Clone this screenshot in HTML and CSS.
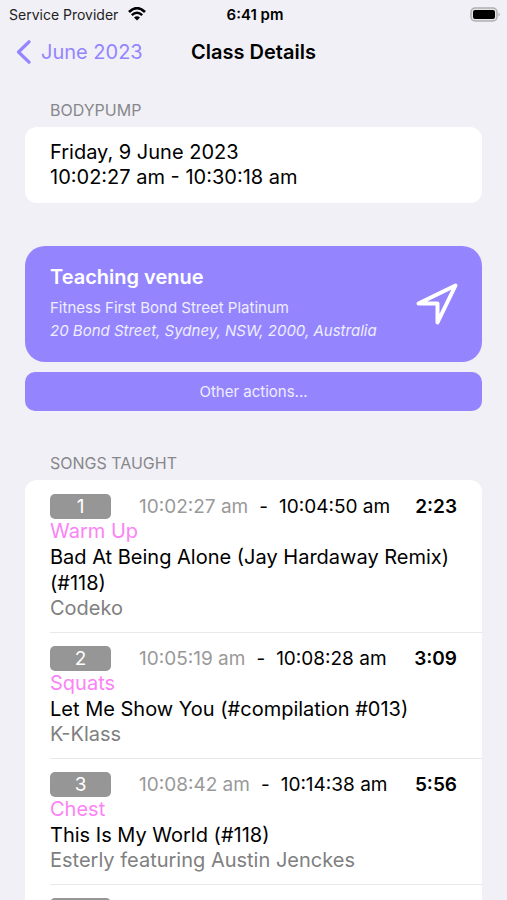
FILE: index.html
```html
<!DOCTYPE html>
<html lang="en">
<head>
<meta charset="utf-8">
<meta name="viewport" content="width=device-width, initial-scale=1">
<title>Class Details</title>
<link rel="stylesheet" href="styles.css">
</head>
<body>
<div class="status">
  <div class="carrier">
    <span>Service Provider</span>
    <svg class="wifi" viewBox="0 0 18 14" aria-hidden="true">
      <path d="M1 5Q9-2.600 17 5" fill="none" stroke="#000" stroke-width="2.700"/>
      <path d="M3.800 8.100Q9 3.300 14.200 8.100" fill="none" stroke="#000" stroke-width="2.500"/>
      <path d="M6 10.500Q9 8 12 10.500L9 13.600Z"/>
    </svg>
  </div>
  <div class="clock">6:41 pm</div>
  <div class="power">
    <svg class="battery" viewBox="0 0 31 15" aria-hidden="true">
      <rect x="1" y="1" width="26" height="13" rx="4" fill="#e4e4e6" stroke="#b0b0b2" stroke-width="1.500"/>
      <rect x="3" y="3" width="22" height="9" rx="2"/>
      <path d="M28.500 5.500Q31 7.500 28.500 9.500Z" fill="#aaa"/>
    </svg>
  </div>
</div>
<header class="nav">
  <a class="back" href="#">
    <svg class="chevron" viewBox="0 0 15 24" aria-hidden="true"><path d="M13 1.800L2.500 12L13 22.200" fill="none" stroke="currentColor" stroke-width="3.200" stroke-linecap="round" stroke-linejoin="round"/></svg>
    <span>June 2023</span>
  </a>
  <h1>Class Details</h1>
</header>
<main>
  <section>
    <h2>BODYPUMP</h2>
    <div class="card session">
      <div>Friday, 9 June 2023</div>
      <div>10:02:27 am - 10:30:18 am</div>
    </div>
  </section>
  <section class="actions">
    <button class="venue" type="button">
      <span class="venue-text">
        <span class="venue-title">Teaching venue</span>
        <span class="venue-line">Fitness First Bond Street Platinum</span>
        <span class="venue-line address">20 Bond Street, Sydney, NSW, 2000, Australia</span>
      </span>
      <svg class="locate" viewBox="0 0 42 42" aria-hidden="true"><path d="M2.500 20.500L39.500 2.500L21.500 39.500V20.500Z" fill="none" stroke="currentColor" stroke-width="4" stroke-linejoin="round"/></svg>
    </button>
    <button class="other" type="button">Other actions...</button>
  </section>
  <section>
    <h2>SONGS TAUGHT</h2>
    <ol class="card songs">
      <li>
        <div class="times"><span class="badge">1</span><span class="start">10:02:27 am</span><span class="dash">-</span><span>10:04:50 am</span><strong>2:23</strong></div>
        <div class="track">Warm Up</div>
        <div class="title">Bad At Being Alone (Jay Hardaway Remix) (#118)</div>
        <div class="artist">Codeko</div>
      </li>
      <li>
        <div class="times"><span class="badge">2</span><span class="start">10:05:19 am</span><span class="dash">-</span><span>10:08:28 am</span><strong>3:09</strong></div>
        <div class="track">Squats</div>
        <div class="title">Let Me Show You (#compilation #013)</div>
        <div class="artist">K-Klass</div>
      </li>
      <li>
        <div class="times"><span class="badge">3</span><span class="start">10:08:42 am</span><span class="dash">-</span><span>10:14:38 am</span><strong>5:56</strong></div>
        <div class="track">Chest</div>
        <div class="title">This Is My World (#118)</div>
        <div class="artist">Esterly featuring Austin Jenckes</div>
      </li>
      <li>
        <div class="times"><span class="badge"></span></div>
      </li>
    </ol>
  </section>
</main>
</body>
</html>
```

FILE: styles.css
```css
* {
  box-sizing: border-box;
}

body {
  margin: 0;
  height: 100vh;
  overflow: hidden;
  background: #f1f0f6;
  color: #000;
  font: 20px/25px Inter, "Liberation Sans", sans-serif;
}

.status {
  display: grid;
  grid-template-columns: 1fr auto 1fr;
  align-items: center;
  height: 28px;
  padding: 0 6px 0 9px;
  font-size: 14px;
}

.carrier {
  display: flex;
  align-items: center;
  gap: 10px;
  color: #222;
}

.wifi {
  width: 18px;
  height: 14px;
}

.clock {
  font-size: 15px;
  font-weight: 600;
}

.power {
  display: flex;
  justify-content: flex-end;
}

.battery {
  width: 31px;
  height: 15px;
}

.nav {
  display: grid;
  grid-template-columns: 1fr auto 1fr;
  align-items: center;
  height: 48px;
  padding: 0 16px;
}

.back {
  display: flex;
  align-items: center;
  gap: 10px;
  color: #9485ff;
  text-decoration: none;
}

.chevron {
  width: 15px;
  height: 24px;
}

h1 {
  margin: 0;
  font-size: 20px;
  font-weight: 600;
}

main {
  padding: 24px 25px 0;
}

h2 {
  margin: 0;
  padding: 0 25px 7px;
  color: #87878c;
  font-size: 16px;
  font-weight: 400;
  line-height: 20px;
}

.card {
  border-radius: 12px;
  background: #fff;
}

.session {
  padding: 13px 25px;
}

.actions {
  display: grid;
  gap: 10px;
  margin: 43px 0 42px;
}

button {
  border: 0;
  background: #9485ff;
  color: #fff;
  font: inherit;
}

.venue {
  display: flex;
  align-items: center;
  justify-content: space-between;
  padding: 19px 24px 20px 25px;
  border-radius: 20px;
  text-align: left;
}

.venue-text {
  display: grid;
}

.venue-title {
  padding-bottom: 6px;
  font-weight: 600;
}

.venue-line {
  color: #efedff;
  font-size: 15px;
  line-height: 23px;
}

.address {
  font-style: italic;
}

.locate {
  width: 42px;
  height: 42px;
}

.other {
  height: 39px;
  border-radius: 10px;
  color: #efedff;
  font-size: 15px;
}

.songs {
  margin: 0;
  padding: 0 0 0 25px;
  list-style: none;
}

.songs li {
  padding: 13px 25px 11px 0;
  border-top: 1px solid #e8e8ea;
}

.songs li:first-child {
  border-color: transparent;
}

.times {
  display: flex;
  font-size: 19px;
}

.badge {
  width: 61px;
  height: 25px;
  margin-right: 28px;
  border-radius: 5px;
  background: #969696;
  color: #fff;
  text-align: center;
}

.start {
  color: #999;
}

.dash {
  padding: 0 11px;
}

strong {
  margin-left: auto;
  font-weight: 600;
}

.track {
  color: #fb83f5;
}

.title {
  line-height: 26px;
}

.artist {
  color: #808080;
}
```
